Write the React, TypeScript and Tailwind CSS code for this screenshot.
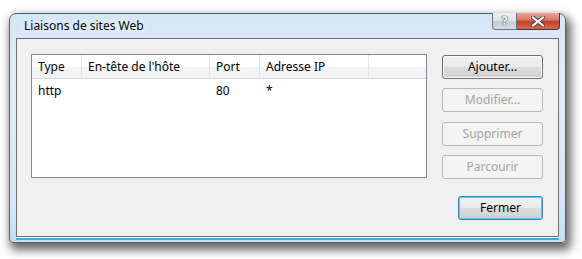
import React from "react";

const font = { fontFamily: '"Noto Sans", "Open Sans", sans-serif' };

const cols = [
  { name: "Type", w: "w-[50px]" },
  { name: "En-tête de l'hôte", w: "w-[128px]" },
  { name: "Port", w: "w-[50px]" },
  { name: "Adresse IP", w: "w-[109px]" },
];

const row = ["http", "", "80", "*"];

function Btn({ label, disabled, def, w = "w-[101px]" }: { label: string; disabled?: boolean; def?: boolean; w?: string }) {
  if (disabled) {
    return (
      <div className={`${w} h-[24px] flex items-center justify-center rounded-[3px] border border-[#b5b9bc] bg-[#f4f4f4] text-[12px] text-[#a3a3a3]`}>
        {label}
      </div>
    );
  }
  return (
    <div
      className={`${w} h-[24px] flex items-center justify-center rounded-[3px] border ${
        def ? "border-[#3c7fb1] shadow-[inset_0_0_0_1px_#48d0f8]" : "border-[#707070] shadow-[inset_0_0_0_1px_#fcfcfc]"
      } bg-[linear-gradient(#f2f2f2_0%,#ebebeb_48%,#dddddd_50%,#cfcfcf_100%)] text-[12px] text-black`}
    >
      {label}
    </div>
  );
}

export default function App() {
  return (
    <div className="w-[582px] h-[259px] bg-white overflow-hidden pt-[13px] pl-[9px]" style={font}>
      <div className="relative w-[557px] h-[230px] rounded-t-[7px] rounded-b-[4px] border border-[#55606c] bg-[linear-gradient(180deg,#d6e6f7_0%,#e2edf9_30%,#d4e6f7_85%,#bfe0f4_100%)] shadow-[3px_5px_10px_2px_rgba(0,0,0,0.6)] flex flex-col px-[6px] pb-[5px]">
        <div className="h-[24px] flex items-center pl-[8px] text-[12px] text-black [text-shadow:0_0_6px_#ffffff]">
          Liaisons de sites Web
        </div>
        <div className="absolute top-[-1px] right-[5px] flex">
          <div className="w-[25px] h-[17px] rounded-bl-[4px] border border-[#6a7580] border-t-0 bg-[linear-gradient(#eef2f6_0%,#dbe3eb_50%,#c4ced8_51%,#d4dde6_100%)] flex items-center justify-center text-[13px] font-bold text-white [text-shadow:0_0_1px_#3c4650,0_0_1px_#3c4650,0_0_1px_#3c4650]">
            ?
          </div>
          <div className="w-[43px] h-[17px] rounded-br-[4px] border border-[#6e2a22] border-t-0 border-l-0 bg-[linear-gradient(#e8a89a_0%,#d9735f_45%,#c2402b_52%,#d26a50_100%)] flex items-center justify-center">
            <svg width="14" height="11" viewBox="0 0 14 11">
              <path d="M2 1.5 L12 9.5 M12 1.5 L2 9.5" stroke="#4b4b4b" strokeWidth="4" strokeLinecap="square" />
              <path d="M2 1.5 L12 9.5 M12 1.5 L2 9.5" stroke="#ffffff" strokeWidth="2" strokeLinecap="square" />
            </svg>
          </div>
        </div>
        <div className="flex-1 border border-[#6b7078] bg-[#f0f0f0] flex pl-[14px] pt-[15px] pr-[15px] shadow-[0_1px_0_#ffffff,0_3px_0_#3aaee0]">
          <div className="w-[396px] h-[124px] border border-[#828790] bg-white flex flex-col">
            <div className="h-[24px] flex border-b border-[#d5d5d5] bg-[linear-gradient(#ffffff_0%,#ffffff_50%,#f3f4f6_51%,#f1f2f4_100%)] text-[12px] text-black">
              {cols.map((c) => (
                <div key={c.name} className={`${c.w} h-full flex items-center pl-[6px] border-r border-[#e3e4e6]`}>
                  {c.name}
                </div>
              ))}
              <div className="flex-1" />
            </div>
            <div className="h-[23px] flex text-[12px] text-black">
              {row.map((v, i) => (
                <div key={i} className={`${cols[i].w} flex items-center pl-[6px]`}>
                  {v}
                </div>
              ))}
            </div>
          </div>
          <div className="flex flex-col ml-[15px] pt-[1px]">
            <Btn label="Ajouter..." />
            <div className="mt-[9px]">
              <Btn label="Modifier..." disabled />
            </div>
            <div className="mt-[10px]">
              <Btn label="Supprimer" disabled />
            </div>
            <div className="mt-[9px]">
              <Btn label="Parcourir" disabled />
            </div>
            <div className="mt-[17px] self-end">
              <Btn label="Fermer" def w="w-[85px]" />
            </div>
          </div>
        </div>
      </div>
    </div>
  );
}
